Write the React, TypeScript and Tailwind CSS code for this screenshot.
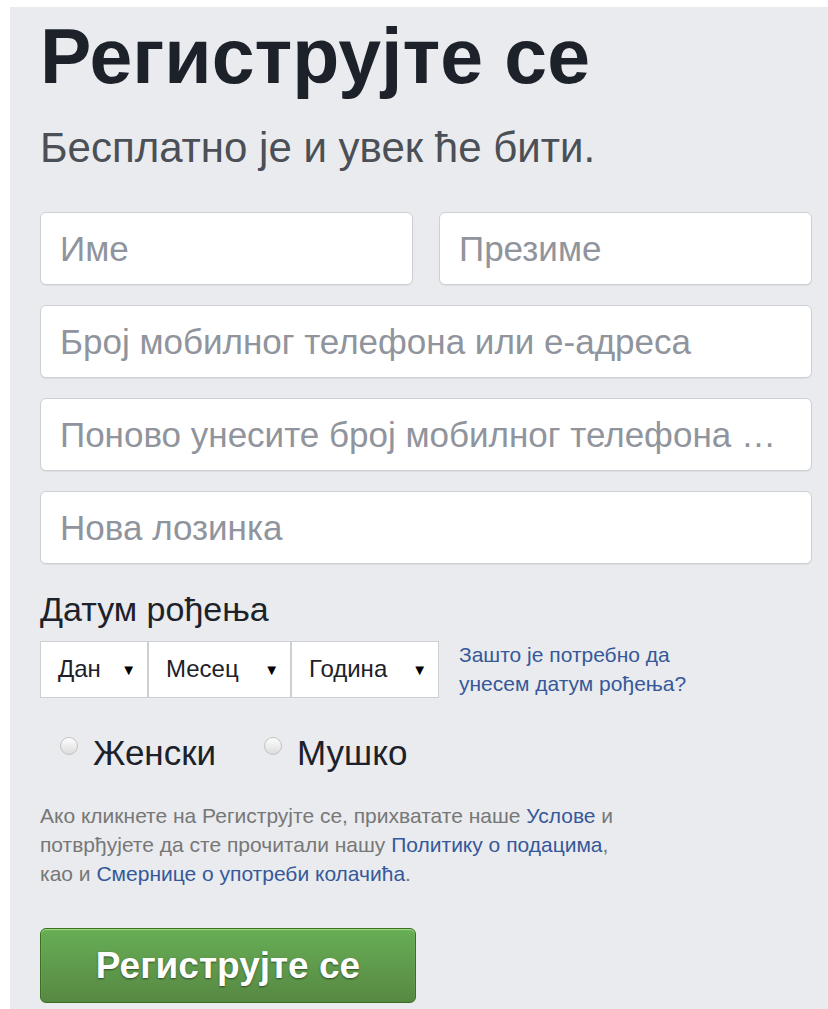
import { useState } from 'react';

type Gender = 'f' | 'm' | null;

const inputClass =
  'block h-[73px] w-full rounded-[6px] border border-[#ccd0d5] bg-white px-[19px] text-[35px] text-[#1d2129] shadow-[0_1px_1px_rgba(0,0,0,0.06)] outline-none text-ellipsis placeholder:text-[#90949c]';

function DateSelect({ label, className }: { label: string; className: string }) {
  return (
    <div
      className={`flex h-[57px] items-center justify-between border border-[#ccd0d5] bg-white pl-[17px] pr-[11px] text-[24px] text-[#1d2129] ${className}`}
    >
      <span>{label}</span>
      <span className="text-[15px] leading-none text-black">▼</span>
    </div>
  );
}

function Radio({ label, checked, onClick }: { label: string; checked: boolean; onClick: () => void }) {
  return (
    <button type="button" onClick={onClick} className="flex items-start gap-[15px]">
      <span
        className={`mt-[2px] block h-[18px] w-[18px] rounded-full border border-[#c3c3c3] bg-[linear-gradient(#fdfdfd,#dcdcdc)] ${
          checked ? 'ring-4 ring-inset ring-[#4267b2]' : ''
        }`}
      />
      <span className="text-[35px] leading-[36px] text-[#1d2129]">{label}</span>
    </button>
  );
}

export default function App() {
  const [gender, setGender] = useState<Gender>(null);

  return (
    <div className="min-h-screen bg-white pl-[10px] pt-[7px] font-['Liberation_Sans',Arial,sans-serif]">
      <div className="min-h-[1002px] bg-[#e9ebee] pl-[30px] pr-[16px] pt-[11px]">
        <h1 className="text-[77px] font-bold leading-[76px] text-[#1d2129]">Региструјте се</h1>
        <p className="mt-[33px] text-[42px] leading-[42px] text-[#4b4f56]">Бесплатно је и увек ће бити.</p>

        <form className="mt-[43px]" onSubmit={(e) => e.preventDefault()}>
          <div className="flex flex-col gap-[20px]">
            <div className="flex gap-[26px]">
              <input className={inputClass} placeholder="Име" />
              <input className={inputClass} placeholder="Презиме" />
            </div>
            <input className={inputClass} placeholder="Број мобилног телефона или е-адреса" />
            <input className={inputClass} placeholder="Поново унесите број мобилног телефона или е-адресу" />
            <input className={inputClass} type="password" placeholder="Нова лозинка" />
          </div>

          <div className="mt-[28px] text-[34px] leading-[34px] text-[#1d2129]">Датум рођења</div>
          <div className="mt-[14px] flex items-center">
            <DateSelect label="Дан" className="w-[108px]" />
            <DateSelect label="Месец" className="w-[143px]" />
            <DateSelect label="Година" className="w-[148px]" />
            <a href="#" className="ml-[20px] text-[21px] leading-[29px] text-[#365899]">
              Зашто је потребно да
              <br />
              унесем датум рођења?
            </a>
          </div>

          <div className="mt-[37px] flex gap-[48px] pl-[20px]">
            <Radio label="Женски" checked={gender === 'f'} onClick={() => setGender('f')} />
            <Radio label="Мушко" checked={gender === 'm'} onClick={() => setGender('m')} />
          </div>

          <p className="mt-[30px] whitespace-nowrap text-[21px] leading-[29px] text-[#777777]">
            Ако кликнете на Региструјте се, прихватате наше <a href="#" className="text-[#365899]">Услове</a> и
            <br />
            потврђујете да сте прочитали нашу <a href="#" className="text-[#365899]">Политику о подацима</a>,
            <br />
            као и <a href="#" className="text-[#365899]">Смернице о употреби колачића</a>.
          </p>

          <button
            type="submit"
            className="mt-[40px] h-[75px] w-[376px] rounded-[6px] border border-[#3b6e22] bg-[linear-gradient(#67ae55,#578843)] text-[37px] font-bold text-white shadow-[inset_0_1px_1px_#a4e388] [text-shadow:0_1px_2px_rgba(0,0,0,0.5)]"
          >
            Региструјте се
          </button>
        </form>
      </div>
    </div>
  );
}
